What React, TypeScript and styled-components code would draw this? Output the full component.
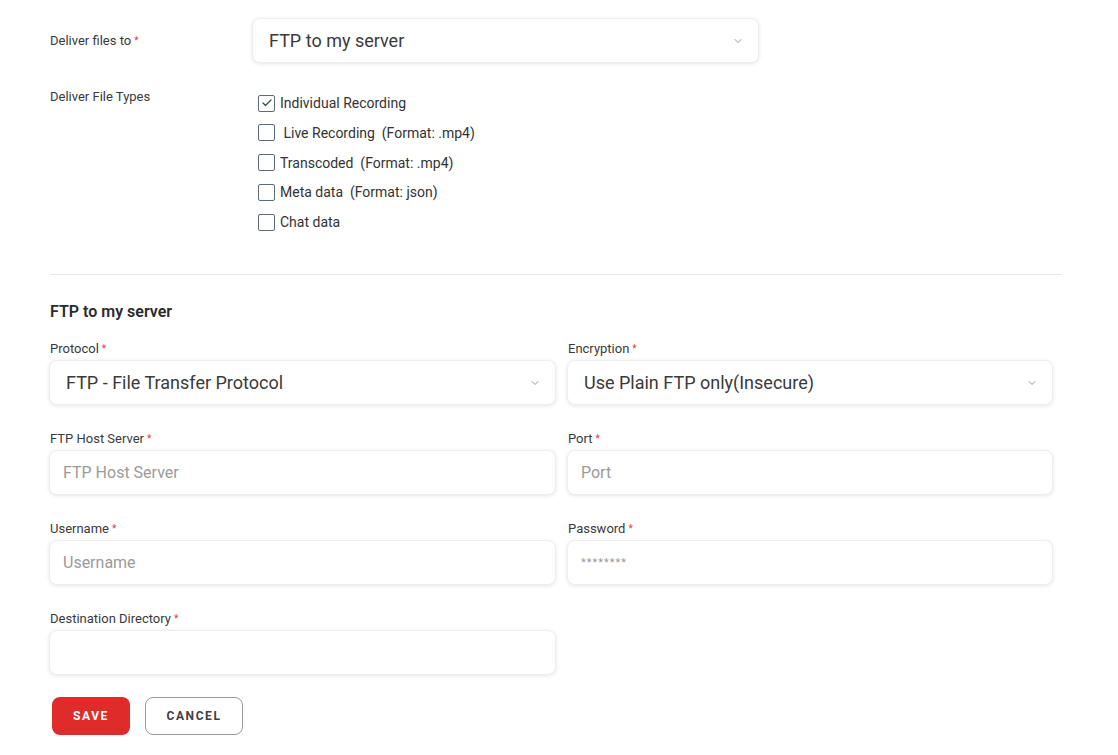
import React, { useState } from 'react'
import styled, { createGlobalStyle } from 'styled-components'
import { ChevronDown, Check } from 'lucide-react'

const GlobalStyle = createGlobalStyle`
  body {
    margin: 0;
    background: #ffffff;
    font-family: Roboto, "Liberation Sans", sans-serif;
    color: #333;
  }
  * { box-sizing: border-box; }
`

const Page = styled.div`
  padding: 18px 56px 20px 49px;
  width: 1118px;
`

const TopRow = styled.div`
  display: grid;
  grid-template-columns: 203px 507px;
  align-items: center;
`

const TypesRow = styled.div`
  display: grid;
  grid-template-columns: 203px 507px;
  align-items: start;
  margin-top: 24px;
`

const SideLabel = styled.div`
  font-size: 13px;
  line-height: 20px;
  color: #3a3a3a;
  padding-left: 1px;
`

const Star = styled.span`
  color: #e53935;
  font-size: 10px;
  margin-left: 3px;
  vertical-align: top;
`

const CheckList = styled.div`
  display: flex;
  flex-direction: column;
  gap: 9.75px;
  padding-left: 6px;
  padding-top: 6px;
`

const CheckRow = styled.label`
  display: flex;
  align-items: center;
  gap: 5px;
  font-size: 14px;
  line-height: 20px;
  color: #333;
  cursor: pointer;
`

const CheckText = styled.span`
  white-space: pre;
`

const Box = styled.span<{ $on: boolean }>`
  width: 17px;
  height: 17px;
  border: 1.5px solid #5d6b78;
  border-radius: 2px;
  display: inline-flex;
  align-items: center;
  justify-content: center;
  color: #3c4a57;
  flex-shrink: 0;
`

const Divider = styled.hr`
  border: none;
  border-top: 1px solid #e9e9ec;
  margin: 42px 0 0 1px;
  width: 1012px;
`

const Heading = styled.h3`
  font-size: 16px;
  font-weight: 600;
  color: #2b2b2b;
  margin: 26px 0 0 1px;
  line-height: 22px;
`

const Grid = styled.div`
  display: grid;
  grid-template-columns: 507px 486px;
  column-gap: 11px;
  row-gap: 23.5px;
  margin-top: 15.5px;
`

const Field = styled.div`
  display: flex;
  flex-direction: column;
`

const FieldLabel = styled.div`
  font-size: 13px;
  line-height: 20px;
  color: #3a3a3a;
  margin-bottom: 1.5px;
  padding-left: 1px;
`

const Control = styled.div`
  height: 45px;
  border-radius: 8px;
  background: #fff;
  border: 1px solid #eeeef0;
  box-shadow: 0 1px 4px rgba(0, 0, 0, 0.1);
  display: flex;
  align-items: center;
  padding: 0 14px 0 16px;
`

const SelectText = styled.span`
  flex: 1;
  font-size: 18px;
  color: #3a3a3a;
`

const Placeholder = styled.span<{ $small?: boolean }>`
  flex: 1;
  font-size: ${p => (p.$small ? '11px' : '16px')};
  color: #9b9b9b;
  letter-spacing: ${p => (p.$small ? '1px' : '0')};
  margin-left: -3px;
`

const Arrow = styled(ChevronDown)`
  color: #777;
`

const Buttons = styled.div`
  display: flex;
  gap: 15px;
  margin-top: 21.5px;
  padding-left: 3px;
`

const Button = styled.button<{ $primary?: boolean }>`
  height: 38px;
  padding: 0 20px;
  border-radius: 8px;
  font-family: Roboto, "Liberation Sans", sans-serif;
  font-size: 12px;
  font-weight: 700;
  letter-spacing: 1.6px;
  cursor: pointer;
  background: ${p => (p.$primary ? '#e02b2b' : '#fff')};
  color: ${p => (p.$primary ? '#fff' : '#3f3f3f')};
  border: ${p => (p.$primary ? 'none' : '1px solid #9a9a9a')};
  min-width: ${p => (p.$primary ? '78px' : '98px')};
`

const fileTypes = [
  'Individual Recording',
  ' Live Recording  (Format: .mp4)',
  'Transcoded  (Format: .mp4)',
  'Meta data  (Format: json)',
  'Chat data',
]

const Select = ({ value }: { value: string }) => (
  <Control>
    <SelectText>{value}</SelectText>
    <Arrow size={12} strokeWidth={1.5} />
  </Control>
)

const TextField = ({ label, placeholder, small }: { label: string; placeholder?: string; small?: boolean }) => (
  <Field>
    <FieldLabel>
      {label}<Star>*</Star>
    </FieldLabel>
    <Control>{placeholder && <Placeholder $small={small}>{placeholder}</Placeholder>}</Control>
  </Field>
)

export default function App() {
  const [checked, setChecked] = useState<boolean[]>([true, false, false, false, false])

  const toggle = (i: number) =>
    setChecked(prev => prev.map((c, idx) => (idx === i ? !c : c)))

  return (
    <Page>
      <GlobalStyle />
      <TopRow>
        <SideLabel>
          Deliver files to<Star>*</Star>
        </SideLabel>
        <Select value="FTP to my server" />
      </TopRow>

      <TypesRow>
        <SideLabel>Deliver File Types</SideLabel>
        <CheckList>
          {fileTypes.map((t, i) => (
            <CheckRow key={t} onClick={() => toggle(i)}>
              <Box $on={checked[i]}>{checked[i] && <Check size={12} strokeWidth={2.5} />}</Box>
              <CheckText>{t}</CheckText>
            </CheckRow>
          ))}
        </CheckList>
      </TypesRow>

      <Divider />

      <Heading>FTP to my server</Heading>

      <Grid>
        <Field>
          <FieldLabel>
            Protocol<Star>*</Star>
          </FieldLabel>
          <Select value="FTP - File Transfer Protocol" />
        </Field>
        <Field>
          <FieldLabel>
            Encryption<Star>*</Star>
          </FieldLabel>
          <Select value="Use Plain FTP only(Insecure)" />
        </Field>
        <TextField label="FTP Host Server" placeholder="FTP Host Server" />
        <TextField label="Port" placeholder="Port" />
        <TextField label="Username" placeholder="Username" />
        <TextField label="Password" placeholder="********" small />
        <TextField label="Destination Directory" />
      </Grid>

      <Buttons>
        <Button $primary>SAVE</Button>
        <Button>CANCEL</Button>
      </Buttons>
    </Page>
  )
}
